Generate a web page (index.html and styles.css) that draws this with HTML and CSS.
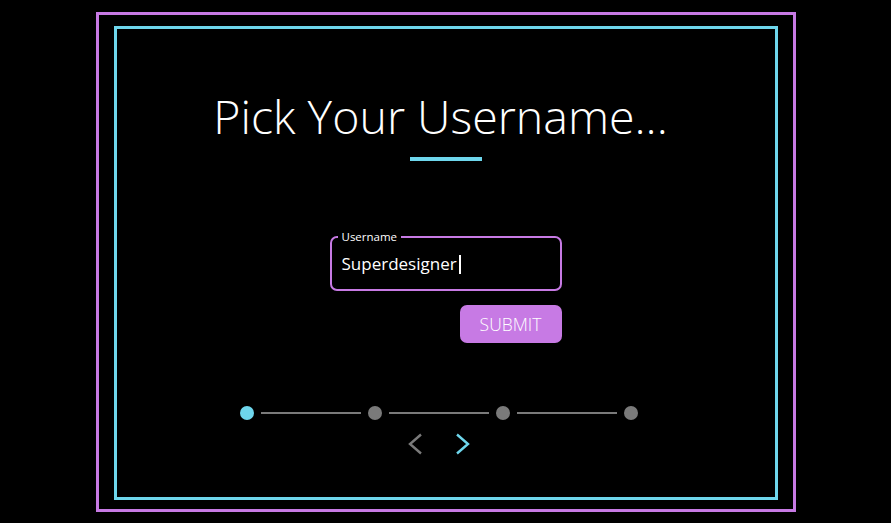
FILE: index.html
```html
<!DOCTYPE html>
<html lang="en">
<head>
<meta charset="utf-8">
<title>Pick Your Username</title>
<link rel="stylesheet" href="styles.css">
</head>
<body>
<div class="outer">
  <div class="inner">
    <h1 class="title">Pick Your Username...</h1>
    <div class="rule"></div>
    <form class="form">
      <fieldset class="field">
        <legend class="legend">Username</legend>
        <div class="value">Superdesigner<span class="caret"></span></div>
      </fieldset>
      <div class="actions">
        <button type="button" class="submit">SUBMIT</button>
      </div>
    </form>
    <div class="stepper">
      <div class="track">
        <span class="dot active"></span>
        <span class="line"></span>
        <span class="dot"></span>
        <span class="line"></span>
        <span class="dot"></span>
        <span class="line"></span>
        <span class="dot"></span>
      </div>
      <div class="nav">
        <svg class="chev" width="16" height="22" viewBox="0 0 16 22"><path d="M14 1.5 L3 11 L14 20.5" fill="none" stroke="#7a7a7a" stroke-width="2.4"/></svg>
        <svg class="chev" width="16" height="22" viewBox="0 0 16 22"><path d="M2 1.5 L13 11 L2 20.5" fill="none" stroke="#6ed6ec" stroke-width="2.4"/></svg>
      </div>
    </div>
  </div>
</div>
</body>
</html>
```

FILE: styles.css
```css
* { box-sizing: border-box; }
html, body { margin: 0; padding: 0; background: #000; }
body {
  font-family: "Open Sans", "Noto Sans", sans-serif;
  color: #fff;
  width: 891px;
  height: 523px;
  overflow: hidden;
}
.outer {
  width: 700px;
  height: 500px;
  margin: 12px auto 0;
  border: 3px solid #c77ae4;
  padding: 11px 15px 9px;
}
.inner {
  height: 100%;
  border: 3px solid #6ed6ec;
  display: flex;
  flex-direction: column;
  align-items: center;
}
.title {
  margin: 57px 10px 0 0;
  font-size: 46.5px;
  font-weight: 300;
  line-height: 60px;
  letter-spacing: 0;
}
.rule {
  width: 72px;
  height: 4px;
  background: #6ed6ec;
  margin-top: 11px;
}
.form {
  margin-top: 70px;
  width: 232px;
  display: flex;
  flex-direction: column;
}
.field {
  margin: 0;
  border: 2px solid #c77ae4;
  border-radius: 7px;
  padding: 0 10px 0;
  height: 60px;
}
.legend {
  font-size: 11.5px;
  padding: 0 4px;
  margin-left: -4px;
  line-height: 12px;
}
.value {
  font-size: 17px;
  line-height: 24px;
  margin-top: 9px;
  display: flex;
  align-items: center;
}
.caret {
  display: inline-block;
  width: 2px;
  height: 19px;
  background: #fff;
  margin-left: 2px;
}
.actions {
  display: flex;
  justify-content: flex-end;
  margin-top: 14px;
}
.submit {
  width: 102px;
  height: 38px;
  border: 0;
  border-radius: 7px;
  background: #c77ae4;
  color: #fff;
  font-family: inherit;
  font-size: 17.5px;
  font-weight: 300;
  padding: 0;
}
.stepper {
  margin-top: 63px;
  margin-right: 14px;
  display: flex;
  flex-direction: column;
  align-items: center;
}
.track {
  display: flex;
  align-items: center;
  gap: 0;
}
.dot {
  width: 14px;
  height: 14px;
  border-radius: 50%;
  background: #7a7a7a;
}
.dot.active { background: #6ed6ec; }
.line {
  width: 100px;
  height: 2px;
  background: #7a7a7a;
  margin: 0 7px;
}
.nav {
  display: flex;
  gap: 32px;
  margin-top: 13px;
}
.chev { display: block; }
```
